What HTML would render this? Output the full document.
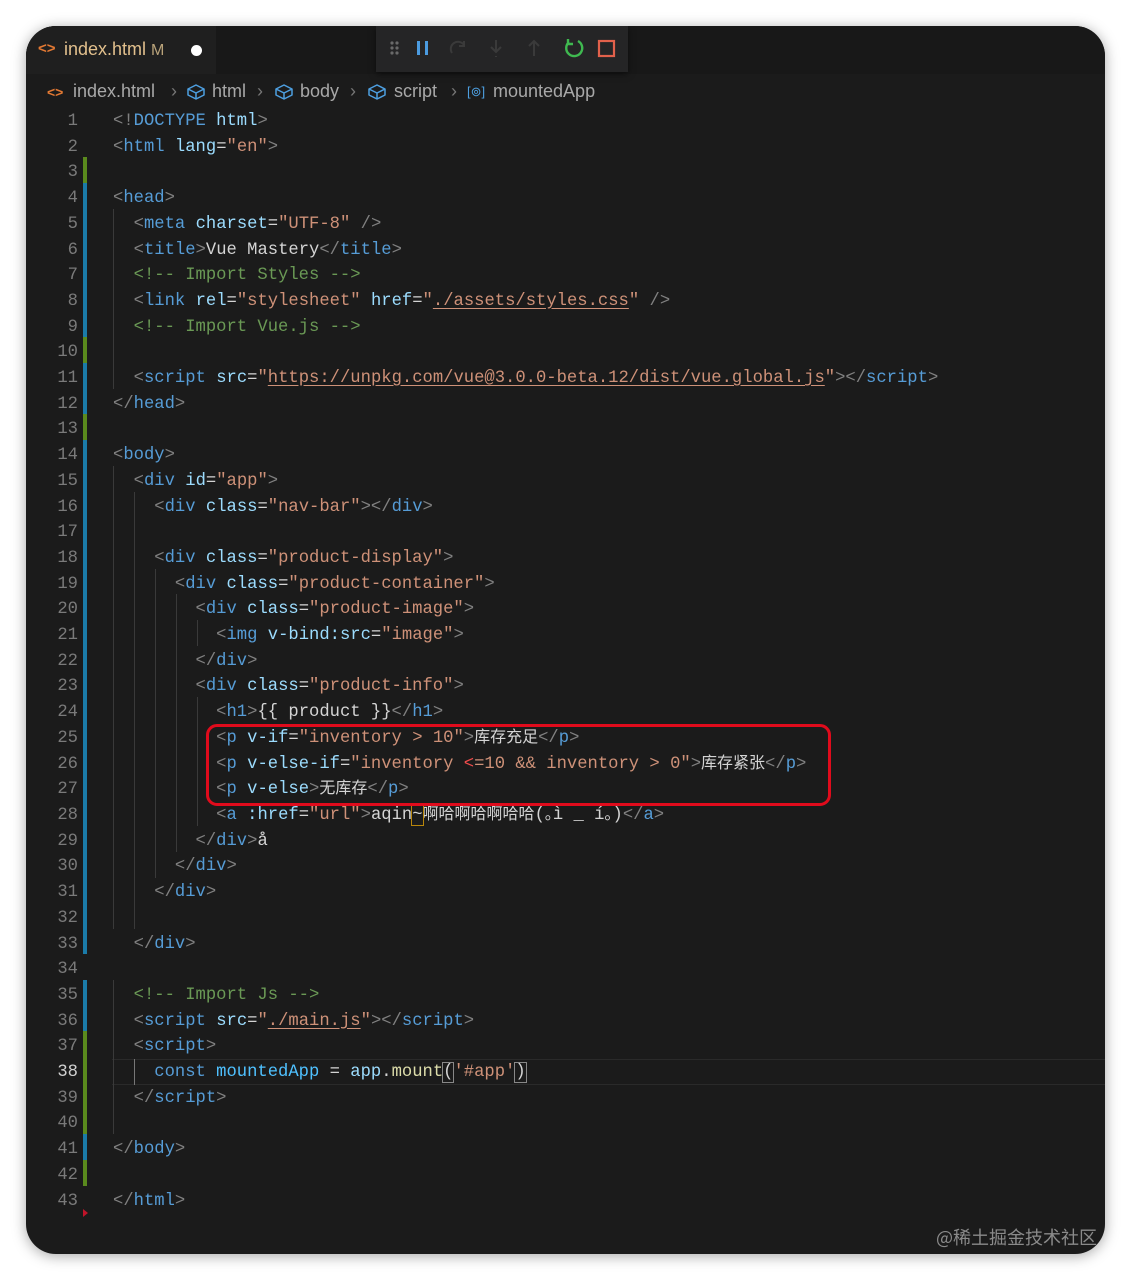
<!DOCTYPE html>
<html><head><meta charset="utf-8"><style>
html,body{margin:0;padding:0;background:#fff;width:1131px;height:1280px;overflow:hidden}
.win{position:absolute;left:26px;top:26px;width:1079px;height:1228px;background:#1b1b1b;border-radius:30px;box-shadow:0 2px 14px rgba(0,0,0,.35);overflow:hidden}
.tabbar{position:absolute;left:0;top:0;width:1079px;height:48px;background:#181818}
.tab{position:absolute;left:0;top:0;width:190px;height:48px;background:#1f1f1f}
.abs{position:absolute}
.ln{position:absolute;left:30px;width:48px;text-align:right;font:17.2px "Liberation Mono",monospace;color:#7a7a7a}
.ln div,.code div{height:25.714px;line-height:25.714px;overflow:visible}
.code{position:absolute;left:113px;font:17.2px "Liberation Mono",monospace;color:#d4d4d4;height:1110px;overflow:hidden;width:990px}
.code div{white-space:pre}
.g{color:#808080}.t{color:#569cd6}.a{color:#9cdcfe}.s{color:#ce9178}.c{color:#6a9955}.x{color:#d4d4d4}
.u{text-decoration:underline;text-underline-offset:3px}
.cj{font-family:"Noto Sans CJK SC",sans-serif;font-size:16px;color:#d4d4d4;line-height:10px}
.bar{position:absolute;left:83px;width:4px}
.gd{position:absolute;width:1px;background:#3a3a3a}
.crumb{position:absolute;top:56px;font:18px "Liberation Sans",sans-serif;color:#a8a8a8;white-space:nowrap}
.sep{color:#777}
</style></head><body>
<div class="win">
<div class="tabbar"></div><div class="tab"></div>
<div class="abs" style="left:12px;top:14px;font:bold 15px 'Liberation Sans',sans-serif;color:#e37933">&lt;&gt;</div>
<div class="abs" style="left:38px;top:13px;font:18px 'Liberation Sans',sans-serif;color:#e2c08d">index.html <span style="color:#b9a37a;font-size:16px">M</span></div>
<div class="abs" style="left:165px;top:19px;width:11px;height:11px;border-radius:50%;background:#fff"></div>
<div class="abs" style="left:350px;top:0;width:252px;height:46px;background:#252526;box-shadow:0 2px 6px rgba(0,0,0,.5)">
<svg width="252" height="46" viewBox="0 0 252 46">
<g fill="#6a6a6a"><circle cx="16" cy="17" r="1.6"/><circle cx="21" cy="17" r="1.6"/><circle cx="16" cy="22" r="1.6"/><circle cx="21" cy="22" r="1.6"/><circle cx="16" cy="27" r="1.6"/><circle cx="21" cy="27" r="1.6"/></g>
<rect x="41" y="15" width="3" height="14" fill="#4b9be0"/><rect x="49" y="15" width="3" height="14" fill="#4b9be0"/>
<path d="M76 27 a7 7 0 0 1 12 -8 M88 15 v5 h-5" stroke="#3a3a3a" stroke-width="2" fill="none"/>
<path d="M120 14 v12 M115 21 l5 5 5-5 M120 30 v1" stroke="#3a3a3a" stroke-width="2" fill="none"/>
<path d="M158 30 v-14 M153 20 l5-5 5 5" stroke="#3a3a3a" stroke-width="2" fill="none"/>
<path d="M190 16 a8 8 0 1 0 9 -1 M189 13 v5 h5" stroke="#3fb950" stroke-width="2.4" fill="none" transform="translate(3,0)"/>
<rect x="223" y="15" width="15" height="15" stroke="#e2614b" stroke-width="2.2" fill="none"/>
</svg></div>
</div>
<div class="abs" style="left:47px;top:84px;font:bold 14px 'Liberation Sans',sans-serif;color:#e37933">&lt;&gt;</div>
<div class="crumb" style="left:73px;top:81px">index.html</div>
<div class="crumb sep" style="left:171px;top:81px">›</div>
<svg class="abs" style="left:186px;top:82px" width="20" height="20" viewBox="0 0 20 20"><path d="M2 7 L10 3 L18 7 L18 13 L10 17 L2 13 Z M2 7 L10 11 L18 7 M10 11 L10 17" stroke="#4d9fe0" stroke-width="1.5" fill="none" stroke-linejoin="round"/></svg>
<div class="crumb" style="left:212px;top:81px">html</div>
<div class="crumb sep" style="left:257px;top:81px">›</div>
<svg class="abs" style="left:274px;top:82px" width="20" height="20" viewBox="0 0 20 20"><path d="M2 7 L10 3 L18 7 L18 13 L10 17 L2 13 Z M2 7 L10 11 L18 7 M10 11 L10 17" stroke="#4d9fe0" stroke-width="1.5" fill="none" stroke-linejoin="round"/></svg>
<div class="crumb" style="left:300px;top:81px">body</div>
<div class="crumb sep" style="left:350px;top:81px">›</div>
<svg class="abs" style="left:367px;top:82px" width="20" height="20" viewBox="0 0 20 20"><path d="M2 7 L10 3 L18 7 L18 13 L10 17 L2 13 Z M2 7 L10 11 L18 7 M10 11 L10 17" stroke="#4d9fe0" stroke-width="1.5" fill="none" stroke-linejoin="round"/></svg>
<div class="crumb" style="left:394px;top:81px">script</div>
<div class="crumb sep" style="left:451px;top:81px">›</div>
<div class="crumb" style="left:467px;top:84px;font-size:13px;color:#4d9fe0">[⊚]</div>
<div class="crumb" style="left:493px;top:81px">mountedApp</div>

<div class="bar" style="top:157px;height:26px;background:#5a8a1d"></div>
<div class="bar" style="top:183px;height:154px;background:#1b7ba8"></div>
<div class="bar" style="top:337px;height:26px;background:#5a8a1d"></div>
<div class="bar" style="top:363px;height:51px;background:#1b7ba8"></div>
<div class="bar" style="top:414px;height:26px;background:#5a8a1d"></div>
<div class="bar" style="top:440px;height:514px;background:#1b7ba8"></div>
<div class="bar" style="top:980px;height:51px;background:#1b7ba8"></div>
<div class="bar" style="top:1031px;height:103px;background:#5a8a1d"></div>
<div class="bar" style="top:1134px;height:26px;background:#1b7ba8"></div>
<div class="bar" style="top:1160px;height:26px;background:#5a8a1d"></div>
<div class="abs" style="left:83px;top:1209px;width:0;height:0;border-top:4px solid transparent;border-bottom:4px solid transparent;border-left:5px solid #c0142a"></div>

<div class="abs" style="left:112px;top:1059px;width:993px;height:24px;border-top:1px solid #2a2a2a;border-bottom:1px solid #2a2a2a"></div>

<div class="gd" style="left:113px;top:209px;height:180px"></div>
<div class="gd" style="left:113px;top:466px;height:463px"></div>
<div class="gd" style="left:113px;top:980px;height:154px"></div>
<div class="gd" style="left:134px;top:492px;height:437px"></div>
<div class="gd" style="left:134px;top:1059px;height:26px;background:#777"></div>
<div class="gd" style="left:155px;top:569px;height:309px"></div>
<div class="gd" style="left:176px;top:594px;height:258px"></div>
<div class="gd" style="left:197px;top:620px;height:26px"></div>
<div class="gd" style="left:197px;top:697px;height:129px"></div>

<div class="ln" style="top:109px"><div>1</div><div>2</div><div>3</div><div>4</div><div>5</div><div>6</div><div>7</div><div>8</div><div>9</div><div>10</div><div>11</div><div>12</div><div>13</div><div>14</div><div>15</div><div>16</div><div>17</div><div>18</div><div>19</div><div>20</div><div>21</div><div>22</div><div>23</div><div>24</div><div>25</div><div>26</div><div>27</div><div>28</div><div>29</div><div>30</div><div>31</div><div>32</div><div>33</div><div>34</div><div>35</div><div>36</div><div>37</div><div style="color:#d0d0d0">38</div><div>39</div><div>40</div><div>41</div><div>42</div><div>43</div></div>

<div class="code" style="top:109px"><div><span class="g">&lt;!</span><span class="t">DOCTYPE</span> <span class="a">html</span><span class="g">&gt;</span></div><div><span class="g">&lt;</span><span class="t">html</span> <span class="a">lang</span>=<span class="s">"en"</span><span class="g">&gt;</span></div><div></div><div><span class="g">&lt;</span><span class="t">head</span><span class="g">&gt;</span></div><div>  <span class="g">&lt;</span><span class="t">meta</span> <span class="a">charset</span>=<span class="s">"UTF-8"</span> <span class="g">/&gt;</span></div><div>  <span class="g">&lt;</span><span class="t">title</span><span class="g">&gt;</span>Vue Mastery<span class="g">&lt;/</span><span class="t">title</span><span class="g">&gt;</span></div><div>  <span class="c">&lt;!-- Import Styles --&gt;</span></div><div>  <span class="g">&lt;</span><span class="t">link</span> <span class="a">rel</span>=<span class="s">"stylesheet"</span> <span class="a">href</span>=<span class="s">"<span class="u">./assets/styles.css</span>"</span> <span class="g">/&gt;</span></div><div>  <span class="c">&lt;!-- Import Vue.js --&gt;</span></div><div></div><div>  <span class="g">&lt;</span><span class="t">script</span> <span class="a">src</span>=<span class="s">"<span class="u">https://unpkg.com/vue@3.0.0-beta.12/dist/vue.global.js</span>"</span><span class="g">&gt;&lt;/</span><span class="t">script</span><span class="g">&gt;</span></div><div><span class="g">&lt;/</span><span class="t">head</span><span class="g">&gt;</span></div><div></div><div><span class="g">&lt;</span><span class="t">body</span><span class="g">&gt;</span></div><div>  <span class="g">&lt;</span><span class="t">div</span> <span class="a">id</span>=<span class="s">"app"</span><span class="g">&gt;</span></div><div>    <span class="g">&lt;</span><span class="t">div</span> <span class="a">class</span>=<span class="s">"nav-bar"</span><span class="g">&gt;&lt;/</span><span class="t">div</span><span class="g">&gt;</span></div><div></div><div>    <span class="g">&lt;</span><span class="t">div</span> <span class="a">class</span>=<span class="s">"product-display"</span><span class="g">&gt;</span></div><div>      <span class="g">&lt;</span><span class="t">div</span> <span class="a">class</span>=<span class="s">"product-container"</span><span class="g">&gt;</span></div><div>        <span class="g">&lt;</span><span class="t">div</span> <span class="a">class</span>=<span class="s">"product-image"</span><span class="g">&gt;</span></div><div>          <span class="g">&lt;</span><span class="t">img</span> <span class="a">v-bind:src</span>=<span class="s">"image"</span><span class="g">&gt;</span></div><div>        <span class="g">&lt;/</span><span class="t">div</span><span class="g">&gt;</span></div><div>        <span class="g">&lt;</span><span class="t">div</span> <span class="a">class</span>=<span class="s">"product-info"</span><span class="g">&gt;</span></div><div>          <span class="g">&lt;</span><span class="t">h1</span><span class="g">&gt;</span>{{ product }}<span class="g">&lt;/</span><span class="t">h1</span><span class="g">&gt;</span></div><div>          <span class="g">&lt;</span><span class="t">p</span> <span class="a">v-if</span>=<span class="s">"inventory &gt; 10"</span><span class="g">&gt;</span><span class="cj">库存充足</span><span class="g">&lt;/</span><span class="t">p</span><span class="g">&gt;</span></div><div>          <span class="g">&lt;</span><span class="t">p</span> <span class="a">v-else-if</span>=<span class="s">"inventory <span style="color:#f14c4c">&lt;</span>=10 &amp;&amp; inventory &gt; 0"</span><span class="g">&gt;</span><span class="cj">库存紧张</span><span class="g">&lt;/</span><span class="t">p</span><span class="g">&gt;</span></div><div>          <span class="g">&lt;</span><span class="t">p</span> <span class="a">v-else</span><span class="g">&gt;</span><span class="cj">无库存</span><span class="g">&lt;/</span><span class="t">p</span><span class="g">&gt;</span></div><div>          <span class="g">&lt;</span><span class="t">a</span> <span class="a">:href</span>=<span class="s">"url"</span><span class="g">&gt;</span>aqin<span style="outline:1px solid #b8860b">~</span><span class="cj">啊哈啊哈啊哈哈</span>(<span class="cj">｡</span>ì _ í<span class="cj">｡</span>)<span class="g">&lt;/</span><span class="t">a</span><span class="g">&gt;</span></div><div>        <span class="g">&lt;/</span><span class="t">div</span><span class="g">&gt;</span>å</div><div>      <span class="g">&lt;/</span><span class="t">div</span><span class="g">&gt;</span></div><div>    <span class="g">&lt;/</span><span class="t">div</span><span class="g">&gt;</span></div><div></div><div>  <span class="g">&lt;/</span><span class="t">div</span><span class="g">&gt;</span></div><div></div><div>  <span class="c">&lt;!-- Import Js --&gt;</span></div><div>  <span class="g">&lt;</span><span class="t">script</span> <span class="a">src</span>=<span class="s">"<span class="u">./main.js</span>"</span><span class="g">&gt;&lt;/</span><span class="t">script</span><span class="g">&gt;</span></div><div>  <span class="g">&lt;</span><span class="t">script</span><span class="g">&gt;</span></div><div>    <span class="t">const</span> <span style="color:#4fc1ff">mountedApp</span> = <span class="a">app</span>.<span style="color:#dcdcaa">mount</span><span style="outline:1px solid #888">(</span><span class="s">'#app'</span><span style="outline:1px solid #888">)</span></div><div>  <span class="g">&lt;/</span><span class="t">script</span><span class="g">&gt;</span></div><div></div><div><span class="g">&lt;/</span><span class="t">body</span><span class="g">&gt;</span></div><div></div><div><span class="g">&lt;/</span><span class="t">html</span><span class="g">&gt;</span></div></div>

<div class="abs" style="left:206px;top:724px;width:619px;height:76px;border:3px solid #e00b1c;border-radius:11px"></div>

<div class="abs" style="left:936px;top:1224px;font:18px 'Noto Sans CJK SC',sans-serif;color:#8a8a8a">@稀土掘金技术社区</div>
</body></html>
